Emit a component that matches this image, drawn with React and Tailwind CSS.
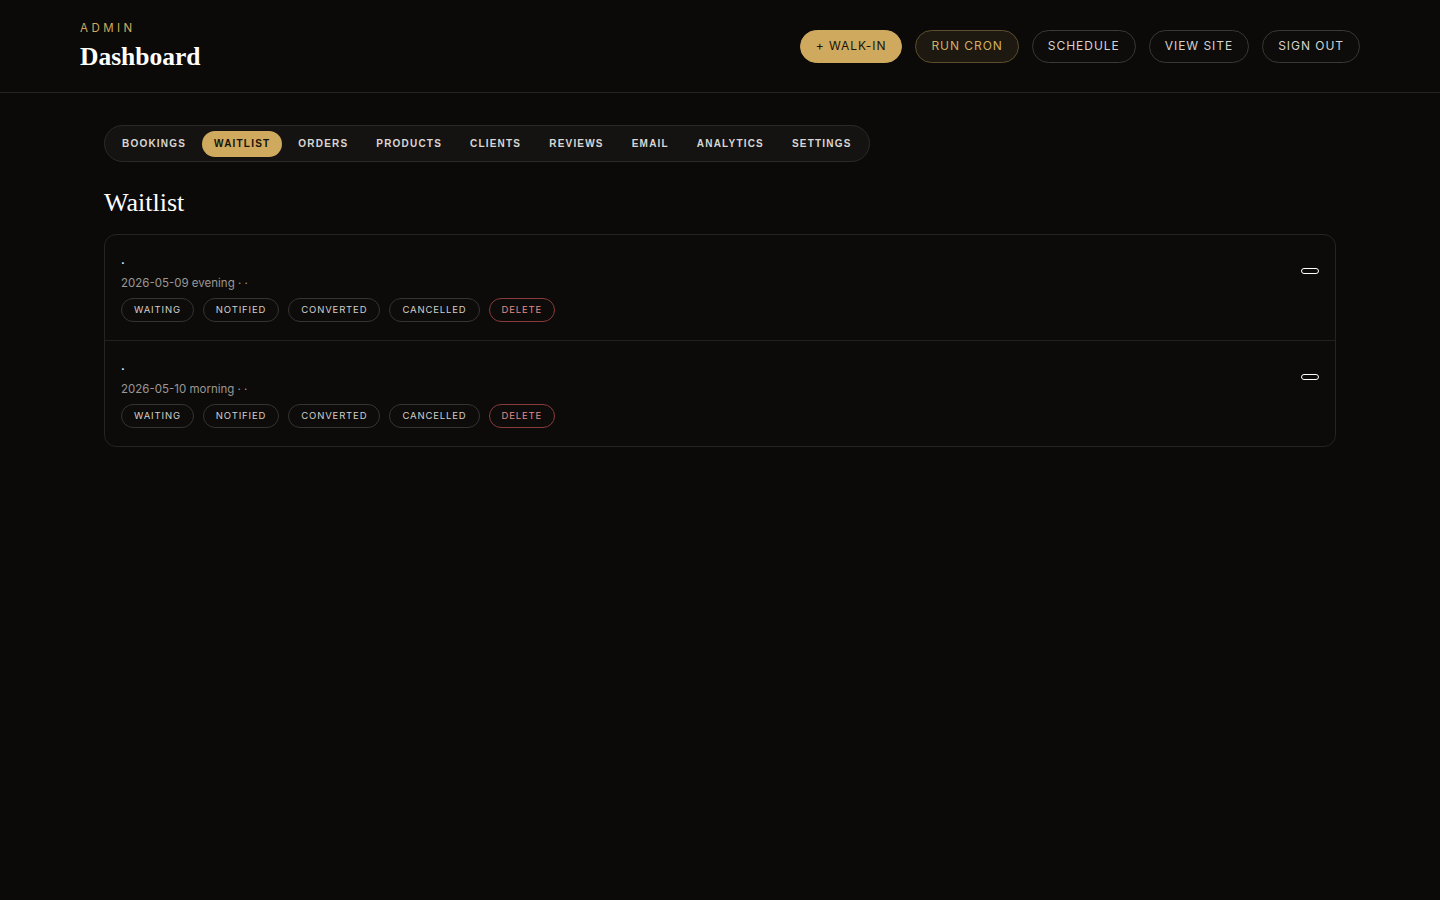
import React from 'react'

const TABS = ['Bookings', 'Waitlist', 'Orders', 'Products', 'Clients', 'Reviews', 'Email', 'Analytics', 'Settings']

const ENTRIES = [
  { id: 1, date: '2026-05-09', slot: 'evening' },
  { id: 2, date: '2026-05-10', slot: 'morning' },
]

const STATUSES = ['Waiting', 'Notified', 'Converted', 'Cancelled']

const serif = { fontFamily: '"Liberation Serif", "DejaVu Serif", serif' }

function HeaderButton({ children, variant }) {
  const styles = {
    gold: 'bg-[#cfaa5e] border-[#cfaa5e] text-[#1a1408]',
    outlineGold: 'bg-[#1d1810] border-[#5e4e2e] text-[#d2ad62]',
    plain: 'bg-[#0d0c0b] border-[#3a3836] text-[#d6d3ce]',
  }
  return (
    <button className={`h-[33px] px-[15px] rounded-full border text-[12px] tracking-[0.08em] uppercase ${styles[variant]}`}>
      {children}
    </button>
  )
}

function EntryRow({ entry, last }) {
  return (
    <div className={`flex justify-between px-[16px] pt-[18px] pb-[18px] ${last ? '' : 'border-b border-[#232120]'}`}>
      <div>
        <div className="text-[13px] leading-[12px] text-white">.</div>
        <div className="mt-[10px] text-[11.5px] leading-[16px] text-[#9a9794]">
          {entry.date} {entry.slot} · ·
        </div>
        <div className="mt-[7px] flex gap-[9px]">
          {STATUSES.map(s => (
            <button
              key={s}
              className="h-[24px] px-[12px] rounded-full border border-[#363432] text-[9.5px] tracking-[0.09em] uppercase text-[#d2cfca] bg-[#0d0c0b]"
            >
              {s}
            </button>
          ))}
          <button className="h-[24px] px-[12px] rounded-full border border-[#8a3a3a] text-[9.5px] tracking-[0.09em] uppercase text-[#e58a86] bg-[#0d0c0b]">
            Delete
          </button>
        </div>
      </div>
      <div className="pt-[15px]">
        <div className="w-[18px] h-[6px] rounded-full border-[1.5px] border-white" />
      </div>
    </div>
  )
}

export default function App() {
  return (
    <div
      className="min-h-screen bg-[#0b0a09] text-white"
      style={{ fontFamily: 'Inter, "Liberation Sans", sans-serif' }}
    >
      {/* Header */}
      <header className="h-[93px] border-b border-[#262422] flex items-center justify-between px-[80px]">
        <div className="mt-[1px]">
          <div className="text-[11.5px] tracking-[0.3em] text-[#cfaa5e]">ADMIN</div>
          <h1 className="mt-[3px] text-[25.5px] leading-[32px] font-bold text-white" style={serif}>Dashboard</h1>
        </div>
        <div className="flex gap-[13px]">
          <HeaderButton variant="gold">+ Walk-in</HeaderButton>
          <HeaderButton variant="outlineGold">Run cron</HeaderButton>
          <HeaderButton variant="plain">Schedule</HeaderButton>
          <HeaderButton variant="plain">View site</HeaderButton>
          <HeaderButton variant="plain">Sign out</HeaderButton>
        </div>
      </header>

      <main className="px-[104px] pt-[32px]">
        {/* Tabs */}
        <nav
          className="inline-flex items-center gap-[4px] h-[37px] px-[5px] rounded-full border border-[#2c2a28] bg-[#141312]"
          style={{ fontFamily: '"Liberation Sans", Arimo, sans-serif' }}
        >
          {TABS.map(t => (
            <button
              key={t}
              className={`h-[26px] px-[12px] rounded-full text-[10px] font-bold tracking-[0.12em] uppercase ${
                t === 'Waitlist' ? 'bg-[#cfaa5e] text-[#17120a]' : 'text-[#d9d6d1]'
              }`}
            >
              {t}
            </button>
          ))}
        </nav>

        <h2 className="mt-[24px] text-[26px] leading-[34px] text-white" style={serif}>Waitlist</h2>

        <div className="mt-[14px] rounded-[12px] border border-[#262422] bg-[#0c0b0a]">
          {ENTRIES.map((e, i) => (
            <EntryRow key={e.id} entry={e} last={i === ENTRIES.length - 1} />
          ))}
        </div>
      </main>
    </div>
  )
}
